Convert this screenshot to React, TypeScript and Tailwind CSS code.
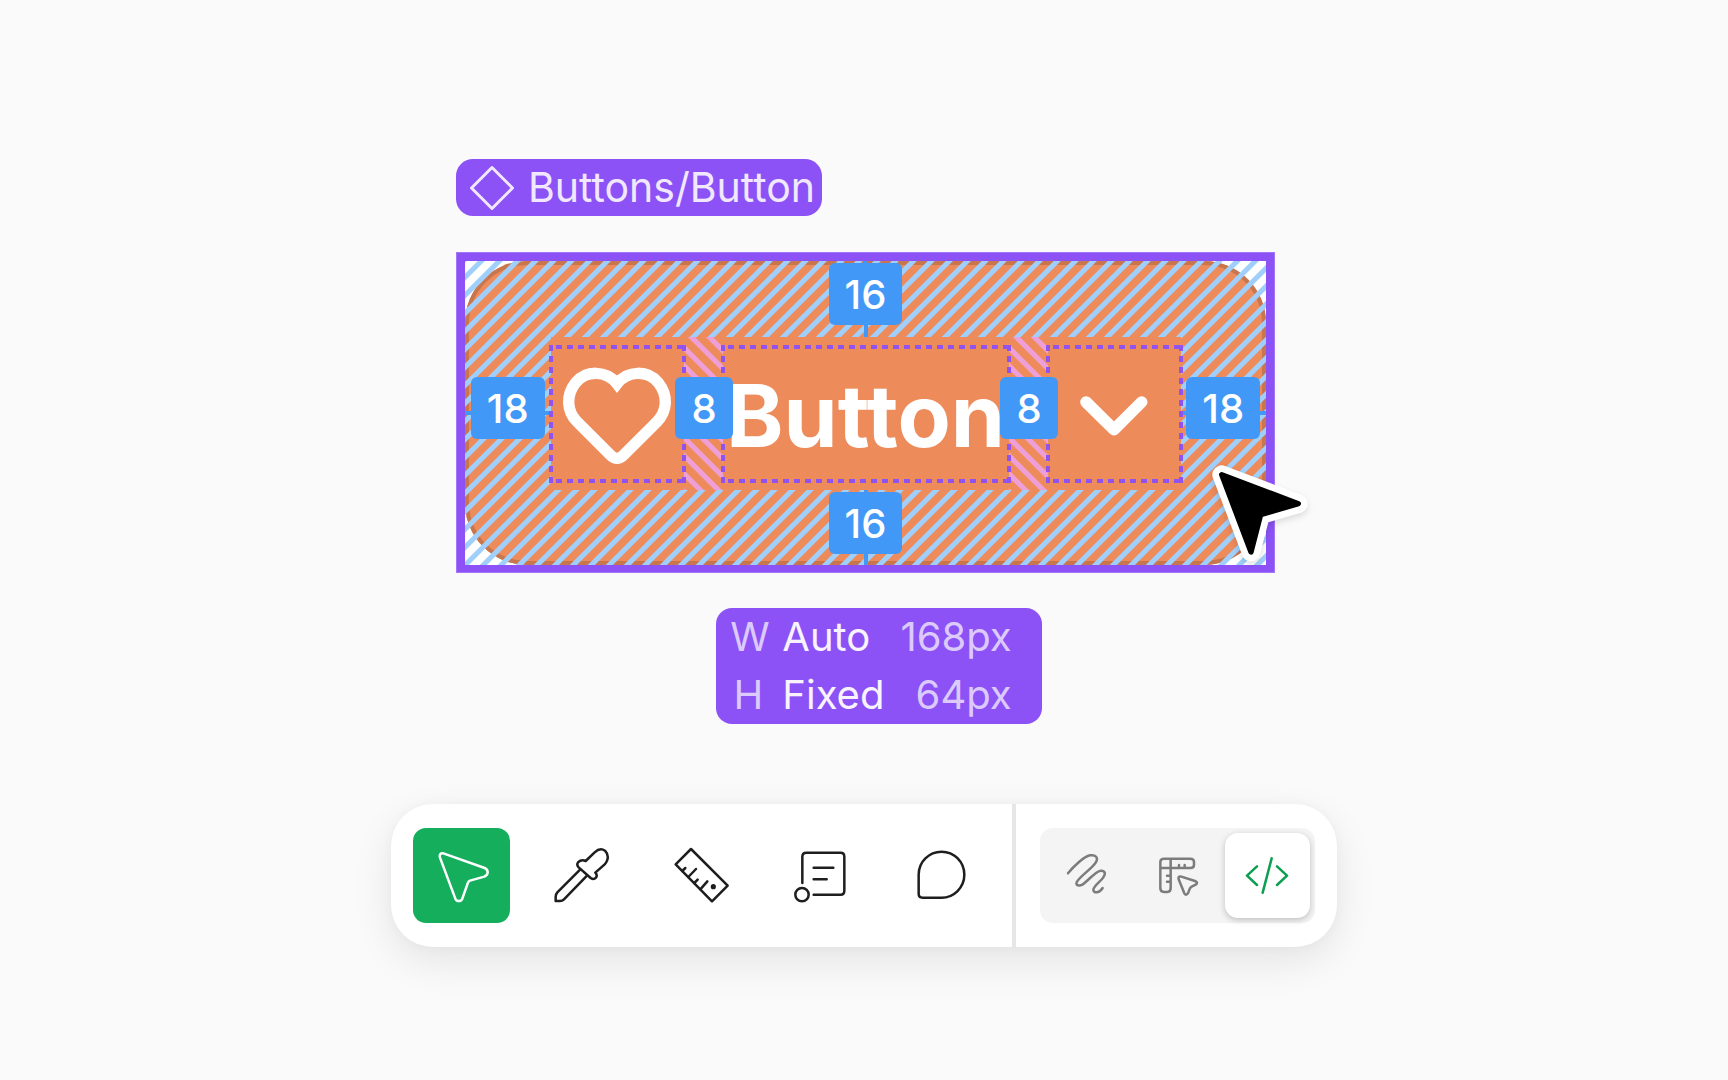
import type { ReactNode } from "react";

const stripes =
  "bg-[linear-gradient(135deg,#9fcffa_17%,transparent_21%,transparent_47%,#9fcffa_51%,#9fcffa_67%,transparent_71%,transparent_97%,#9fcffa_100%)] bg-[length:18px_18px] bg-[position:13px_0px]";
const gapStripes =
  "bg-[linear-gradient(45deg,#ef9fd8_17%,transparent_21%,transparent_47%,#ef9fd8_51%,#ef9fd8_67%,transparent_71%,transparent_97%,#ef9fd8_100%)] bg-[length:18px_18px] bg-[position:4px_0px]";
const dashX =
  "bg-[repeating-linear-gradient(90deg,transparent_0px,transparent_5px,#9153ee_5px,#9153ee_11px)]";
const dashY =
  "bg-[repeating-linear-gradient(180deg,#9153ee_0px,#9153ee_6px,transparent_6px,transparent_11px)]";

function Badge({ children }: { children: ReactNode }) {
  return (
    <span className="relative z-10 flex h-[62px] shrink-0 items-center rounded-md bg-[#4298f6] px-4 pt-0.5 text-[40px] leading-none font-medium text-white">
      {children}
    </span>
  );
}

function Item({ className, children }: { className: string; children: ReactNode }) {
  return (
    <div className={`relative flex h-[138px] shrink-0 items-center justify-center ${className}`}>
      <span className={`absolute inset-x-0 top-0 h-1 ${dashX}`} />
      <span className={`absolute inset-x-0 bottom-0 h-1 ${dashX}`} />
      <span className={`absolute inset-y-0 -left-0.5 z-[5] w-1 ${dashY}`} />
      <span className={`absolute inset-y-0 -right-0.5 z-[5] w-1 ${dashY}`} />
      {children}
    </div>
  );
}

function Gap() {
  return (
    <div className={`flex w-[39px] shrink-0 items-center justify-center self-stretch pb-[11px] pl-0.5 ${gapStripes}`}>
      <Badge>8</Badge>
    </div>
  );
}

function SidePadding() {
  return (
    <div className="relative flex flex-1 items-center justify-center pb-[11px]">
      <span className="absolute inset-x-0 top-[74px] h-1 bg-[#4298f6]" />
      <Badge>18</Badge>
    </div>
  );
}

function EndPadding({ className }: { className: string }) {
  return (
    <div className={`relative flex items-start justify-center pt-0.5 ${className}`}>
      <span className="absolute inset-y-0 left-1/2 -ml-0.5 w-1 bg-[#4298f6]" />
      <Badge>16</Badge>
    </div>
  );
}

function Icon({ viewBox, children }: { viewBox: string; children: ReactNode }) {
  return (
    <svg
      viewBox={viewBox}
      className="size-[60px]"
      fill="none"
      stroke="currentColor"
      strokeWidth="7.5"
      strokeLinecap="round"
      strokeLinejoin="round"
      aria-hidden="true"
    >
      {children}
    </svg>
  );
}

const tools = [
  {
    label: "Move",
    icon: (
      <Icon viewBox="157 167 180 180">
        <path d="M181 202Q177 188 191 189L315 233Q324 237 324 246Q324 255 314 259L271 271Q266 273 264 279L248 325Q245 332 237 332Q230 332 227 325Z" />
      </Icon>
    ),
  },
  {
    label: "Color picker",
    icon: (
      <Icon viewBox="22 18 180 180">
        <path d="M123 63L150 37Q166 22 181 32Q194 46 187 62Q185 68 180 73L152 98Q159 105 154 113Q147 120 138 114L102 82Q95 75 100 67Q110 57 123 63Z" />
        <path d="M107 88L38 157Q33 163 33 170V183H46Q53 183 58 178L127 107" />
      </Icon>
    ),
  },
  {
    label: "Measure",
    icon: (
      <Icon viewBox="19 18 180 180">
        <path d="M76 27L186 137L139 184L30 73Z" />
        <path d="M50 93L59 84M68 111L91 87M86 129L96 119M104 148L125 124" />
        <circle cx="143" cy="140" r="4" fill="currentColor" />
      </Icon>
    ),
  },
  {
    label: "Annotate",
    icon: (
      <Icon viewBox="425 168 180 180">
        <path d="M456 279V200Q456 188 468 188H571Q582 188 582 200V302Q582 314 571 314H490M490 233H549M490 268H529" />
        <circle cx="455" cy="314" r="20" />
      </Icon>
    ),
  },
  {
    label: "Comment",
    icon: (
      <Icon viewBox="786 168 180 180">
        <path d="M806 254A68.5 69 0 1 1 874 323H818Q806 323 806 312Z" />
      </Icon>
    ),
  },
];

const modes = [
  {
    label: "Draw",
    icon: (
      <Icon viewBox="8 18 180 180">
        <path d="M38 100C56 77 86 50 104 46C120 43 131 53 121 68C110 86 72 110 64 127C61 137 72 139 81 134C97 124 120 94 136 92C149 91 152 101 144 112C135 126 114 138 114 150C115 161 133 159 142 144" />
      </Icon>
    ),
  },
  {
    label: "Design",
    icon: (
      <Icon viewBox="278 18 180 180">
        <path d="M326 56H405Q416 56 416 66V74Q416 84 405 84H346V145Q346 156 336 156H326Q315 156 315 145V66Q315 56 326 56ZM346 56V84M315 84H346M371 75V80M388 75V80M335 107H341M335 125H341" />
        <path d="M370 118Q367 107 378 110L419 123Q430 128 421 134L409 140Q405 142 403 147L398 160Q392 168 387 160Z" />
      </Icon>
    ),
  },
  {
    label: "Dev Mode",
    icon: (
      <Icon viewBox="713 168 180 180">
        <path d="M770 229L740 257L770 285M830 229L860 257L830 285M814 205L787 308" />
      </Icon>
    ),
  },
];

export default function App() {
  return (
    <main className="flex min-h-screen flex-col items-center bg-[#fafafa] px-4 pt-[159px] pb-16 font-['Inter',sans-serif]">
      <section className="relative ml-[3px] flex w-full max-w-[819px] flex-col items-start">
        <div className="flex h-[57px] items-center rounded-[17px] bg-[#8c52f6] pr-[7px] pl-[12px] text-[41px] leading-none text-[#f1e8ff]">
          <svg viewBox="0 0 48 48" className="mr-[12px] size-12" fill="none" stroke="currentColor" strokeWidth="3" strokeLinejoin="round" aria-hidden="true">
            <path d="M24 3.500L44.500 24L24 44.500L3.500 24Z" />
          </svg>
          <span>Buttons/Button</span>
        </div>

        <div className="relative mt-9 w-full border border-[#a376f8]">
          <div className="border-8 border-b-[7px] border-[#8c52f6] bg-white">
            <div className="rounded-[62px] bg-[#ee8b5b] shadow-[inset_0_0_0_4px_#c8764e]">
              <div className={stripes}>
                <EndPadding className="h-[76px]" />
                <div className="flex h-[153px]">
                  <SidePadding />
                  <div className="flex items-center bg-[#ee8b5b]">
                    <Item className="w-[133px]">
                      <svg viewBox="367 116 330 330" className="size-[110px]" fill="none" stroke="white" strokeWidth="34" strokeLinejoin="miter" aria-hidden="true">
                        <path d="M532 190C500 149 439 149 408 187C378 225 381 272 412 304L512 404Q532 424 552 404L652 304C683 272 686 225 656 187C625 149 564 149 532 190Z" />
                      </svg>
                    </Item>
                    <Gap />
                    <Item className="w-[286px]">
                      <span className="pt-1 text-[87px] leading-none font-bold text-white">Button</span>
                    </Item>
                    <Gap />
                    <Item className="w-[133px]">
                      <svg viewBox="282 400 240 240" className="size-20" fill="none" stroke="white" strokeWidth="35" strokeLinecap="round" strokeLinejoin="round" aria-hidden="true">
                        <path d="M318 484L402 567L485 484" />
                      </svg>
                    </Item>
                  </div>
                  <SidePadding />
                </div>
                <EndPadding className="h-[75px]" />
              </div>
            </div>
          </div>
          <svg viewBox="690 665 330 330" className="absolute -right-[46px] bottom-0 z-20 size-[110px] drop-shadow-md" strokeLinejoin="round" aria-hidden="true">
            <path d="M725 703L955 790L842 823L813 935Z" fill="white" stroke="white" strokeWidth="56" />
            <path d="M725 703L955 790L842 823L813 935Z" fill="black" stroke="black" strokeWidth="16" />
          </svg>
        </div>
      </section>

      <dl className="mt-[35px] ml-[30px] grid grid-cols-[36px_auto_auto] gap-x-4 rounded-2xl bg-[#8c52f6] pr-[30px] pl-[14px] text-[40px] leading-[58px] text-[#dccafd]">
        <dt className="text-center">W</dt>
        <dd className="text-[#f8f3ff]">Auto</dd>
        <dd className="text-right">168px</dd>
        <dt className="text-center">H</dt>
        <dd className="text-[#f8f3ff]">Fixed</dd>
        <dd className="text-right">64px</dd>
      </dl>

      <div className="mt-20 flex rounded-[42px] bg-white shadow-[0_14px_40px_rgba(0,0,0,0.09),0_0_12px_rgba(0,0,0,0.03)]">
        <div role="toolbar" aria-label="Tools" className="flex gap-[23px] px-[22px] py-6">
          {tools.map((tool, i) => (
            <button
              key={tool.label}
              type="button"
              aria-label={tool.label}
              className={`flex h-[95px] w-[97px] items-center justify-center rounded-[13px] ${i === 0 ? "bg-[#14ae5c] text-white" : "text-[#1e1e1e]"}`}
            >
              {tool.icon}
            </button>
          ))}
        </div>
        <div className="w-1 bg-[#e6e6e6]" />
        <div className="py-6 pr-[22px] pl-6">
          <div role="group" aria-label="Mode" className="flex gap-[5px] rounded-[13px] bg-[#f4f4f4] p-[5px]">
            {modes.map((mode, i) => (
              <button
                key={mode.label}
                type="button"
                aria-label={mode.label}
                aria-pressed={i === 2}
                className={`flex size-[85px] items-center justify-center rounded-[13px] ${i === 2 ? "bg-white text-[#0d9f51] shadow-[0_2px_6px_rgba(0,0,0,0.22)]" : "text-[#7c7c7c]"}`}
              >
                {mode.icon}
              </button>
            ))}
          </div>
        </div>
      </div>
    </main>
  );
}
